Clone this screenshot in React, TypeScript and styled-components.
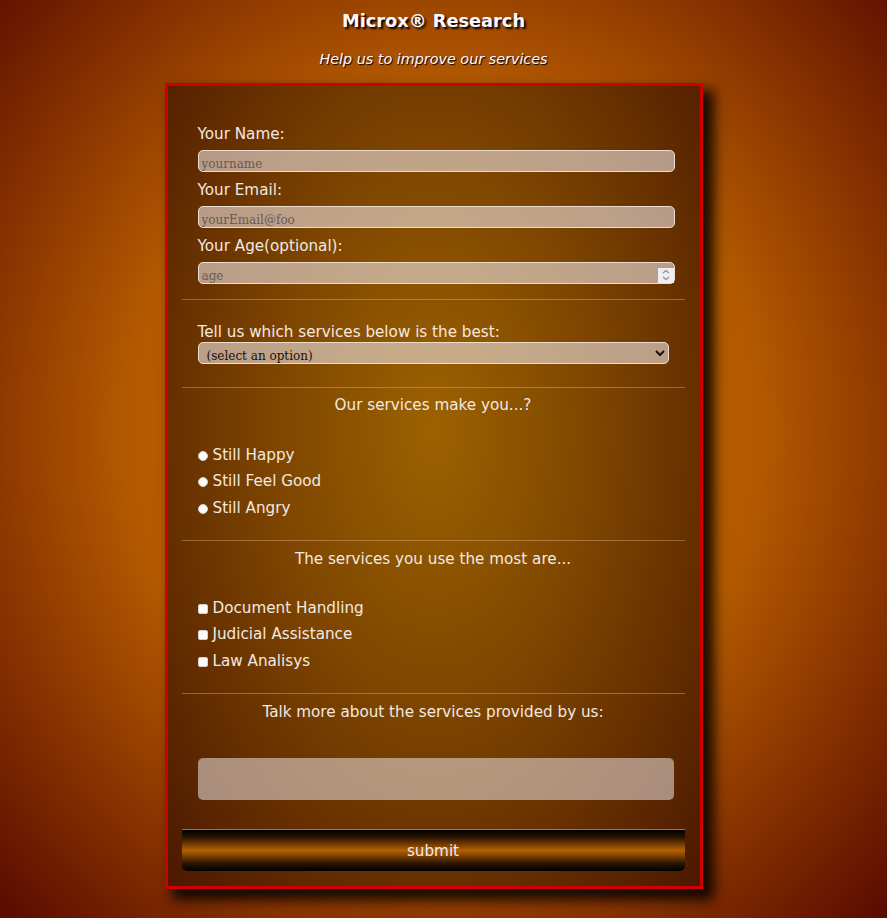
import styled, { createGlobalStyle } from 'styled-components';

const GlobalStyle = createGlobalStyle`
  html, body {
    margin: 0;
    padding: 0;
  }
  body {
    min-height: 918px;
    font-family: "DejaVu Sans", "Liberation Sans", sans-serif;
    background: radial-gradient(ellipse at 50% 47%, #c46600 0%, #b35a00 50%, #5a0a00 100%);
    background-repeat: no-repeat;
    background-attachment: fixed;
  }
`;

const Page = styled.div`
  box-sizing: border-box;
  width: 100%;
  padding: 10px 20px 30px 0;
  display: flex;
  flex-direction: column;
  align-items: center;
`;

const Title = styled.h1`
  margin: 0;
  font-size: 17.8px;
  line-height: 22px;
  font-weight: bold;
  color: #fbf8ff;
  text-shadow: 2px 2px 2px #000;
`;

const Subtitle = styled.p`
  margin: 18.5px 0 15.5px;
  font-size: 14.35px;
  line-height: 17px;
  font-style: italic;
  color: #fbf8ff;
  text-shadow: 1px 1px 1px #000;
`;

const Form = styled.form`
  box-sizing: border-box;
  width: 538px;
  border: 3px solid #d00000;
  padding: 29px 15px 15px 14px;
  background: radial-gradient(ellipse at 50% 43%, #9c6200 0%, #7e4600 42%, #4c1800 100%);
  box-shadow: 9px 9px 12px 2px rgba(0, 0, 0, 0.85);
  color: #f3e9e0;
  display: flex;
  flex-direction: column;
`;

const Section = styled.div<{ $top?: number; $bottom?: number }>`
  display: flex;
  flex-direction: column;
  padding: ${(p) => p.$top ?? 0}px 0 ${(p) => p.$bottom ?? 0}px 16px;
`;

const Label = styled.label<{ $gap?: number }>`
  display: block;
  padding-top: 2px;
  font-size: 15.2px;
  line-height: 19px;
  margin-bottom: ${(p) => p.$gap ?? 0}px;
`;

const fieldBase = `
  box-sizing: border-box;
  background: rgba(230, 218, 212, 0.64);
  border: 1px solid #eadccf;
  border-radius: 5px;
  font-family: "DejaVu Serif", "Liberation Serif", serif;
  font-size: 12px;
  color: #3a2a20;
  outline: none;
`;

const FieldWrap = styled.div`
  position: relative;
  width: 477px;
  height: 22px;
`;

const TextInput = styled.input<{ $gap?: number }>`
  ${fieldBase}
  flex: none;
  width: 477px;
  height: 22px;
  padding: 7px 3px 0;
  line-height: 12px;
  margin: 0 0 ${(p) => p.$gap ?? 0}px;
  &::placeholder {
    color: #6b5a50;
  }
  &::-webkit-inner-spin-button {
    display: none;
  }
`;

const Spinner = styled.span`
  position: absolute;
  right: 1px;
  bottom: 1px;
  width: 16px;
  height: 15px;
  background: #eeeef3;
  display: flex;
  align-items: center;
  justify-content: center;
`;

const Select = styled.select`
  ${fieldBase}
  width: 471px;
  height: 22px;
  padding: 5px 4px 0;
  color: #1a1008;
`;

const Rule = styled.hr`
  width: 100%;
  margin: 0;
  border: none;
  border-top: 1px solid rgba(230, 190, 150, 0.4);
`;

const Heading = styled.p<{ $top: number; $bottom: number }>`
  margin: ${(p) => p.$top}px 0 ${(p) => p.$bottom}px;
  text-align: center;
  font-size: 15.2px;
  line-height: 19px;
`;

const Choices = styled.div`
  display: flex;
  flex-direction: column;
  gap: 7.5px;
  padding: 0 0 22px 16px;
`;

const Choice = styled.label`
  display: flex;
  align-items: center;
  gap: 5px;
  font-size: 15.2px;
  line-height: 19px;
`;

const Mark = styled.input<{ $round?: boolean }>`
  appearance: none;
  margin: 1px 0 0;
  width: 10px;
  height: 10px;
  background: #fdfbfa;
  border: 1px solid #d6cfcc;
  border-radius: ${(p) => (p.$round ? '50%' : '2px')};
  box-sizing: border-box;
`;

const TextArea = styled.textarea`
  ${fieldBase}
  width: 476px;
  height: 42px;
  border: none;
  resize: none;
  background: rgba(220, 206, 200, 0.62);
  margin: 36px 0 29px 16px;
`;

const Submit = styled.button`
  width: 100%;
  height: 42px;
  border: none;
  border-top: 1px solid #9c7650;
  border-radius: 0 0 5px 5px;
  background: linear-gradient(to bottom, #000 0%, #2a1400 18%, #b56000 50%, #2a1400 82%, #000 100%);
  color: #f3ecf4;
  font-family: "DejaVu Sans", sans-serif;
  font-size: 15.2px;
  padding: 2px 0 0;
`;

const SpinIcon = () => (
  <svg width="8" height="12" viewBox="0 0 8 12" fill="none" stroke="#8a8a90" strokeWidth="1.1">
    <path d="M1 4 L4 1.5 L7 4" />
    <path d="M1 8 L4 10.5 L7 8" />
  </svg>
);

export default function App() {
  return (
    <>
      <GlobalStyle />
      <Page>
        <Title>Microx® Research</Title>
        <Subtitle>Help us to improve our services</Subtitle>
        <Form onSubmit={(e) => e.preventDefault()}>
          <Section $top={8} $bottom={15}>
            <Label $gap={5.5}>Your Name:</Label>
            <TextInput type="text" placeholder="yourname" $gap={7.5} />
            <Label $gap={5.5}>Your Email:</Label>
            <TextInput type="email" placeholder="yourEmail@foo" $gap={7.5} />
            <Label $gap={5.5}>Your Age(optional):</Label>
            <FieldWrap>
              <TextInput type="number" placeholder="age" />
              <Spinner>
                <SpinIcon />
              </Spinner>
            </FieldWrap>
          </Section>
          <Rule />
          <Section $top={21} $bottom={23}>
            <Label>Tell us which services below is the best:</Label>
            <Select defaultValue="">
              <option value="" disabled>
                (select an option)
              </option>
              <option>Document Handling</option>
              <option>Judicial Assistance</option>
              <option>Law Analisys</option>
            </Select>
          </Section>
          <Rule />
          <Heading $top={8} $bottom={31}>Our services make you...?</Heading>
          <Choices>
            <Choice><Mark type="radio" name="mood" $round />Still Happy</Choice>
            <Choice><Mark type="radio" name="mood" $round />Still Feel Good</Choice>
            <Choice><Mark type="radio" name="mood" $round />Still Angry</Choice>
          </Choices>
          <Rule />
          <Heading $top={9} $bottom={30}>The services you use the most are...</Heading>
          <Choices>
            <Choice><Mark type="checkbox" />Document Handling</Choice>
            <Choice><Mark type="checkbox" />Judicial Assistance</Choice>
            <Choice><Mark type="checkbox" />Law Analisys</Choice>
          </Choices>
          <Rule />
          <Heading $top={9} $bottom={0}>Talk more about the services provided by us:</Heading>
          <TextArea />
          <Submit type="submit">submit</Submit>
        </Form>
      </Page>
    </>
  );
}
